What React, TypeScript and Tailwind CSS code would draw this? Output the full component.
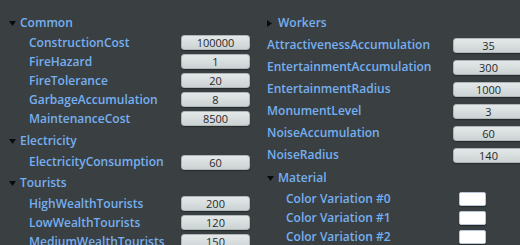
const common = [
  { name: "ConstructionCost", value: "100000" },
  { name: "FireHazard", value: "1" },
  { name: "FireTolerance", value: "20" },
  { name: "GarbageAccumulation", value: "8" },
  { name: "MaintenanceCost", value: "8500" },
]

const tourists = [
  { name: "HighWealthTourists", value: "200" },
  { name: "LowWealthTourists", value: "120" },
  { name: "MediumWealthTourists", value: "150" },
]

const building = [
  { name: "AttractivenessAccumulation", value: "35" },
  { name: "EntertainmentAccumulation", value: "300" },
  { name: "EntertainmentRadius", value: "1000" },
  { name: "MonumentLevel", value: "3" },
  { name: "NoiseAccumulation", value: "60" },
  { name: "NoiseRadius", value: "140" },
]

const colors = ["Color Variation #0", "Color Variation #1", "Color Variation #2"]

function Arrow({ open }: { open: boolean }) {
  return open ? (
    <svg width="7" height="5" viewBox="0 0 7 5" className="shrink-0">
      <path d="M0 0 L7 0 L3.5 5 Z" fill="#0b0b0b" />
    </svg>
  ) : (
    <svg width="5" height="7" viewBox="0 0 5 7" className="shrink-0">
      <path d="M0 0 L5 3.5 L0 7 Z" fill="#0b0b0b" />
    </svg>
  )
}

function Header({ label, open, pad }: { label: string; open: boolean; pad: string }) {
  return (
    <div className={`flex h-5 items-center ${pad}`}>
      <div className="flex w-[11px] items-center">
        <Arrow open={open} />
      </div>
      <span>{label}</span>
    </div>
  )
}

function ValueBox({ value, width }: { value: string; width: string }) {
  return (
    <div
      className={`flex h-[15px] ${width} items-center justify-center rounded-[3px] border border-[#aeb6b8] bg-gradient-to-b from-[#e4e8e8] to-[#ccd3d4] text-[11px] font-normal leading-none text-[#262a2c] shadow-[0_1px_1px_rgba(0,0,0,0.35)]`}
    >
      {value}
    </div>
  )
}

export default function App() {
  return (
    <div
      className="flex h-[245px] w-[520px] overflow-hidden bg-[#3a4042] text-[12px] font-semibold text-[#76aff0]"
      style={{ fontFamily: '"Open Sans", "Noto Sans", sans-serif' }}
    >
      {/* left column */}
      <div className="flex w-[262px] shrink-0 flex-col pt-[14px]">
        <Header label="Common" open pad="pl-[9px]" />
        <div className="mt-px flex flex-col">
          {common.map((r) => (
            <div key={r.name} className="flex h-[19px] items-center justify-between pl-[29px] pr-[12px]">
              <span>{r.name}</span>
              <ValueBox value={r.value} width="w-[69px]" />
            </div>
          ))}
        </div>

        <div className="mt-[3px]">
          <Header label="Electricity" open pad="pl-[9px]" />
        </div>
        <div className="mt-[2px] flex h-[19px] items-center justify-between pl-[29px] pr-[12px]">
          <span>ElectricityConsumption</span>
          <ValueBox value="60" width="w-[69px]" />
        </div>

        <div className="mt-[2px]">
          <Header label="Tourists" open pad="pl-[9px]" />
        </div>
        <div className="mt-px flex flex-col">
          {tourists.map((r) => (
            <div key={r.name} className="flex h-[19px] shrink-0 items-center justify-between pl-[29px] pr-[12px]">
              <span>{r.name}</span>
              <ValueBox value={r.value} width="w-[69px]" />
            </div>
          ))}
        </div>
      </div>

      {/* right column */}
      <div className="flex flex-1 flex-col pt-[14px]">
        <Header label="Workers" open={false} pad="pl-[5px]" />
        <div className="mt-[2px] flex flex-col">
          {building.map((r) => (
            <div key={r.name} className="flex h-[22px] items-center justify-between pl-[5px]">
              <span>{r.name}</span>
              <div className="-mr-[4px]">
                <ValueBox value={r.value} width="w-[71px]" />
              </div>
            </div>
          ))}
        </div>

        <div className="mt-[2px]">
          <Header label="Material" open pad="pl-[5px]" />
        </div>
        <div className="mt-px flex flex-col">
          {colors.map((c) => (
            <div key={c} className="flex h-[19px] shrink-0 items-center pl-[24px]">
              <span className="w-[173px]">{c}</span>
              <div className="h-[14px] w-[27px] rounded-[2px] border border-[#b9c6d6] bg-white shadow-[0_1px_1px_rgba(0,0,0,0.4)]" />
            </div>
          ))}
        </div>
      </div>
    </div>
  )
}
